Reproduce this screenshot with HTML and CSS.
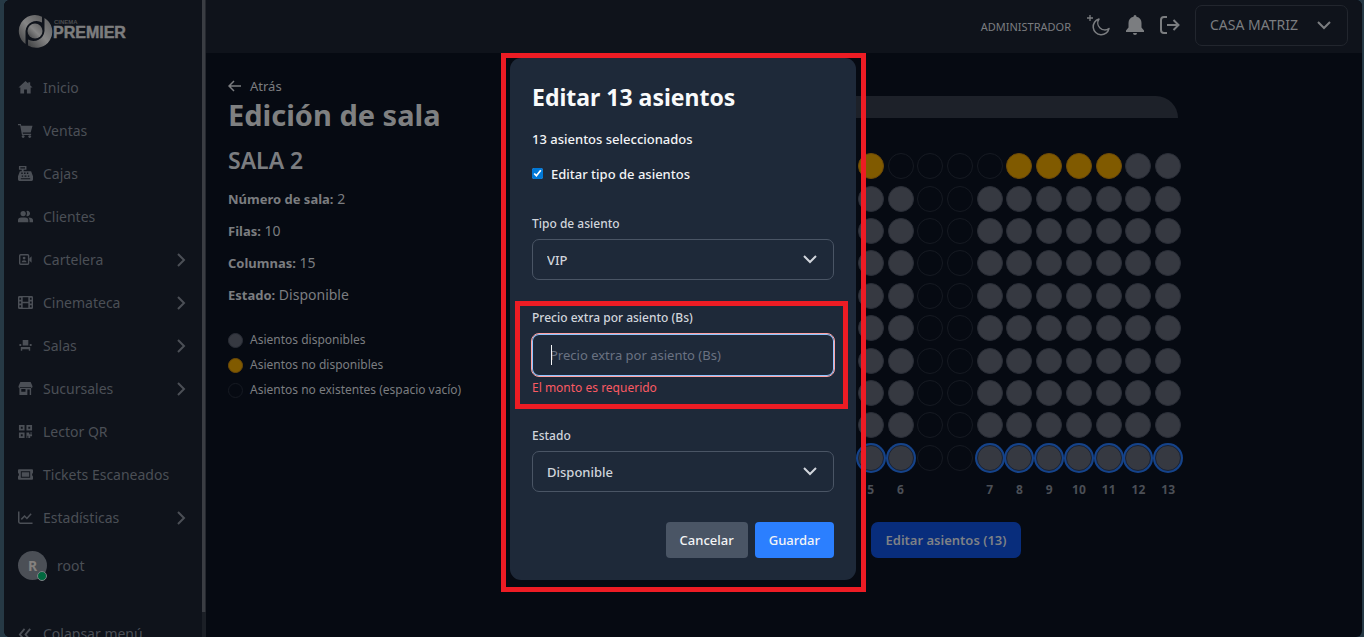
FILE: index.html
```html
<!DOCTYPE html>
<html lang="es">
<head>
    <meta charset="UTF-8">
    <meta name="viewport" content="width=device-width, initial-scale=1.0">
    <title>Edición de sala - Cinema Premier</title>
    <link rel="stylesheet" href="styles.css">
</head>
<body>

    <div class="app">
        <aside class="sidebar">
            <div class="sidebar-content">
                <a href="#" class="logo" aria-label="Cinema Premier">
                    <svg width="114" height="34" viewBox="0 0 114 34">
                        <defs>
                            <linearGradient id="metal" x1="0" y1="1" x2="1" y2="0">
                                <stop offset="0" stop-color="#3c3d3f"/>
                                <stop offset="0.5" stop-color="#858585"/>
                                <stop offset="1" stop-color="#5c5c5d"/>
                            </linearGradient>
                        </defs>
                        <path d="M24 2.700V8.500A11 11 0 0 0 7.500 17V30A16 16 0 0 1 24 2.700Z" fill="url(#metal)"/>
                        <path d="M26.500 4A16 16 0 0 1 10 31.500V25.500A11 11 0 0 0 26.500 17Z" fill="url(#metal)"/>
                        <circle cx="17" cy="17" r="7.500" fill="url(#metal)"/>
                        <text x="36" y="10" class="logo-small">CINEMA</text>
                        <text x="35" y="24" class="logo-text">PREMIER</text>
                    </svg>
                </a>

                <nav class="menu">
                    <a href="#"><svg viewBox="0 0 16 16"><path d="M8 1 0.500 8H2.500V14.500H6.500V10H9.500V14.500H13.500V8H15.500L13 5.600V2.500H11V3.800Z"/></svg><span>Inicio</span></a>
                    <a href="#"><svg viewBox="0 0 16 16"><path d="M0 1H3L3.500 3H15.500L13.500 10H5L5.300 11.500H14V12.700H4.200L2.300 2.300H0Z"/><circle cx="5.500" cy="14.500" r="1.500"/><circle cx="12.500" cy="14.500" r="1.500"/></svg><span>Ventas</span></a>
                    <a href="#"><svg viewBox="0 0 16 16"><path fill-rule="evenodd" d="M1 0H9V4H6V5.500H14L16 11V14.500Q16 16 14.500 16H1.500Q0 16 0 14.500V11L2 5.500H4V4H1ZM2.500 1.300V2.600H7.500V1.300ZM3.500 7V8.500H5V7ZM6.500 7V8.500H8V7ZM9.500 7V8.500H11V7ZM4 10V11.500H5.500V10ZM7 10V11.500H9V10ZM10.500 10V11.500H12V10ZM3 13V14.200H13V13Z"/></svg><span>Cajas</span></a>
                    <a href="#"><svg viewBox="0 0 16 16"><circle cx="5.500" cy="4.800" r="2.800"/><path d="M9 2.200A2.800 2.800 0 1 1 9 7.400Q10.500 4.800 9 2.200ZM0 14V12Q0 9 3.500 9H7.500Q11 9 11 12V14ZM12.300 14V12Q12.300 10.300 11 9Q16 9 16 12V14Z"/></svg><span>Clientes</span></a>
                    <a href="#" class="has-children"><svg viewBox="0 0 16 16"><rect x="1.800" y="3" width="9.500" height="10" rx="1" fill="none" stroke="currentColor" stroke-width="1.500"/><circle cx="6.500" cy="6.500" r="1.500"/><path d="M3.800 11Q4 8.800 6.500 8.800T9.200 11ZM12 7 14.500 4.500V11.500L12 9Z"/></svg><span>Cartelera</span><svg class="chevron" viewBox="0 0 16 16"><path d="M5 2 11 8 5 14"/></svg></a>
                    <a href="#" class="has-children"><svg viewBox="0 0 16 16"><path fill-rule="evenodd" d="M1.500 1H14.500Q16 1 16 2.500V13.500Q16 15 14.500 15H1.500Q0 15 0 13.500V2.500Q0 1 1.500 1ZM5 2.500V7.200H11V2.500ZM5 8.800V13.500H11V8.800ZM1.500 3V5H3.300V3ZM1.500 7V9H3.300V7ZM1.500 11V13H3.300V11ZM12.700 3V5H14.500V3ZM12.700 7V9H14.500V7ZM12.700 11V13H14.500V11Z"/></svg><span>Cinemateca</span><svg class="chevron" viewBox="0 0 16 16"><path d="M5 2 11 8 5 14"/></svg></a>
                    <a href="#" class="has-children"><svg viewBox="0 0 16 16"><path d="M5 2H11V8H5ZM1.500 6.500H3.500V8.500H1.500ZM12.500 6.500H14.500V8.500H12.500ZM3 9.500H13V13.500H11.500V12H4.500V13.500H3Z"/></svg><span>Salas</span><svg class="chevron" viewBox="0 0 16 16"><path d="M5 2 11 8 5 14"/></svg></a>
                    <a href="#" class="has-children"><svg viewBox="0 0 16 16"><path fill-rule="evenodd" d="M2.500 1H13.500L15.500 5.500Q15.500 7.500 14 7.500V15H1.500V7.500Q0.500 7.500 0.500 5.500ZM3.500 8.500V11.500H8V8.500ZM10 9V15H12.500V9ZM2 7.200H14V6.500H2Z"/></svg><span>Sucursales</span><svg class="chevron" viewBox="0 0 16 16"><path d="M5 2 11 8 5 14"/></svg></a>
                    <a href="#"><svg viewBox="0 0 16 16"><path fill-rule="evenodd" d="M1 1H7V7H1ZM3 3V5H5V3ZM9 1H15V7H9ZM11 3V5H13V3ZM1 9H7V15H1ZM3 11V13H5V11ZM9 9H12V11H15V13H13V15H11V12.500H10V15H9ZM13 9H15V10H13Z"/></svg><span>Lector QR</span></a>
                    <a href="#"><svg viewBox="0 0 16 16"><path fill-rule="evenodd" d="M1 2.500H15Q16 2.500 16 3.500V6Q14 8 16 10V12.500Q16 13.500 15 13.500H1Q0 13.500 0 12.500V10Q2 8 0 6V3.500Q0 2.500 1 2.500ZM3 4.500V11.500H13V4.500ZM4 5.500H12V10.500H4Z"/></svg><span>Tickets Escaneados</span></a>
                    <a href="#" class="has-children"><svg viewBox="0 0 16 16"><path d="M0.800 1.500V12.500Q0.800 14 2.300 14H15.500M3.500 10 7 6.500 9.500 9 14 4" fill="none" stroke="currentColor" stroke-width="1.600"/></svg><span>Estadísticas</span><svg class="chevron" viewBox="0 0 16 16"><path d="M5 2 11 8 5 14"/></svg></a>
                </nav>

                <a href="#" class="user">
                    <span class="avatar">R<i class="status"></i></span>
                    <span>root</span>
                </a>

                <button type="button" class="collapse">
                    <svg viewBox="0 0 16 16"><path d="M7 2 2 8 7 14M13 2 8 8 13 14"/></svg>
                    <span>Colapsar menú</span>
                </button>
            </div>
            <div class="scroll"><div class="scroll-thumb"></div></div>
        </aside>

        <div class="page">
            <header class="topbar">
                <span class="role">ADMINISTRADOR</span>
                <button type="button" class="icon-button" aria-label="Modo oscuro">
                    <svg width="24" height="24" viewBox="0 0 24 24"><path d="M12 6A8 8 0 1 0 22 15.500A7 7 0 0 1 12 6Z" fill="none" stroke="currentColor" stroke-width="1.500" stroke-linejoin="round"/><path d="M3 2V8M0 5H6" stroke="currentColor" stroke-width="1.300"/></svg>
                </button>
                <button type="button" class="icon-button" aria-label="Notificaciones">
                    <svg width="20" height="22" viewBox="0 0 20 22"><path d="M10 1Q11.500 1 11.500 2.800Q16.500 4 16.500 9V13.500L19 16.500V18H1V16.500L3.500 13.500V9Q3.500 4 8.500 2.800Q8.500 1 10 1ZM8 19H12Q12 21 10 21T8 19Z" fill="currentColor"/></svg>
                </button>
                <button type="button" class="icon-button" aria-label="Cerrar sesión">
                    <svg width="22" height="20" viewBox="0 0 22 20"><path d="M8 2H5Q2 2 2 5V15Q2 18 5 18H8M8 10H19M14.500 5 19.500 10 14.500 15" fill="none" stroke="currentColor" stroke-width="2"/></svg>
                </button>
                <div class="select-box branch">
                    <select aria-label="Sucursal">
                        <option>CASA MATRIZ</option>
                    </select>
                    <svg class="arrow" viewBox="0 0 16 16"><path d="M2 5 8 11 14 5"/></svg>
                </div>
            </header>

            <main class="content">
                <section class="info">
                    <a href="#" class="back">
                        <svg width="14" height="12" viewBox="0 0 14 12"><path d="M6 1 1 6 6 11M1 6H13" fill="none" stroke="currentColor" stroke-width="1.500"/></svg>
                        <span>Atrás</span>
                    </a>
                    <h1>Edición de sala</h1>
                    <h2>SALA 2</h2>
                    <p><b>Número de sala:</b> 2</p>
                    <p><b>Filas:</b> 10</p>
                    <p><b>Columnas:</b> 15</p>
                    <p><b>Estado:</b> Disponible</p>
                    <ul class="legend">
                        <li><i class="dot"></i>Asientos disponibles</li>
                        <li><i class="dot taken"></i>Asientos no disponibles</li>
                        <li><i class="dot empty"></i>Asientos no existentes (espacio vacío)</li>
                    </ul>
                </section>

                <section class="room">
                    <div class="screen"></div>
                    <div class="seats" id="seats"></div>
                    <div class="columns" id="columns"></div>
                    <button type="button" class="edit-seats">Editar asientos (13)</button>
                </section>
            </main>
        </div>
    </div>

    <div class="overlay">
        <form class="modal" role="dialog" aria-labelledby="modalTitle">
            <h3 id="modalTitle">Editar 13 asientos</h3>
            <p class="selected-count">13 asientos seleccionados</p>
            <label class="check">
                <input type="checkbox" checked>
                Editar tipo de asientos
            </label>

            <div class="field">
                <label for="tipo">Tipo de asiento</label>
                <div class="select-box">
                    <select id="tipo">
                        <option>VIP</option>
                    </select>
                    <svg class="arrow" viewBox="0 0 16 16"><path d="M2 5 8 11 14 5"/></svg>
                </div>
            </div>

            <div class="field marked">
                <label for="precio">Precio extra por asiento (Bs)</label>
                <div class="price-box">
                    <input type="text" id="precio" placeholder="Precio extra por asiento (Bs)">
                    <i class="caret"></i>
                </div>
                <span class="error">El monto es requerido</span>
            </div>

            <div class="field">
                <label for="estado">Estado</label>
                <div class="select-box">
                    <select id="estado">
                        <option>Disponible</option>
                    </select>
                    <svg class="arrow" viewBox="0 0 16 16"><path d="M2 5 8 11 14 5"/></svg>
                </div>
            </div>

            <div class="actions">
                <button type="button" class="cancel">Cancelar</button>
                <button type="submit" class="save">Guardar</button>
            </div>
        </form>
    </div>

    <script src="seats.js"></script>
</body>
</html>
```
FILE: styles.css
```css
* {
    box-sizing: border-box;
}
body {
    margin: 0;
    font-family: "Noto Sans", "Open Sans", sans-serif;
    font-size: 13px;
    line-height: 20px;
    background-color: #263945;
    color: #7b7d80;
}
a {
    color: inherit;
    text-decoration: none;
}
button, input, select {
    font-family: inherit;
    font-size: inherit;
    line-height: inherit;
    color: inherit;
}
.app {
    display: flex;
    height: 100vh;
    margin: 0 2px 0 4px;
    border-radius: 6px;
    overflow: hidden;
    background-color: #060a12;
}

/* Menú lateral */
.sidebar {
    display: flex;
    flex: none;
    width: 202px;
    background-color: #0f131b;
    color: #4b4f56;
}
.sidebar-content {
    flex: 1;
    padding: 14px 13px 0 14px;
    overflow: hidden;
}
.logo {
    display: block;
    height: 52px;
}
.logo-text {
    font: bold 16px "Liberation Sans", sans-serif;
    fill: #7d7d7e;
    stroke: #7d7d7e;
    stroke-width: 0.5px;
}
.logo-small {
    font: bold 6px "Liberation Sans", sans-serif;
    fill: #4b4d50;
}
.menu a {
    display: flex;
    align-items: center;
    height: 43px;
    gap: 10px;
}
.menu svg, .collapse svg {
    flex: none;
    width: 15px;
    height: 15px;
    fill: currentColor;
}
.menu span {
    flex: 1;
    font-size: 14px;
}
.menu .chevron {
    width: 16px;
    height: 16px;
}
.menu .chevron path, .collapse path {
    fill: none;
    stroke: currentColor;
    stroke-width: 2;
}
.user {
    display: flex;
    align-items: center;
    gap: 10px;
    margin-top: 12px;
    font-size: 14px;
}
.avatar {
    position: relative;
    width: 29px;
    height: 29px;
    border-radius: 50%;
    background-color: #4b4f56;
    color: #85817f;
    font-weight: bold;
    line-height: 29px;
    text-align: center;
}
.status {
    position: absolute;
    right: 0;
    bottom: -1px;
    width: 10px;
    height: 10px;
    border: 1px solid #7d8085;
    border-radius: 50%;
    background-color: #00693f;
}
.collapse {
    display: flex;
    align-items: center;
    gap: 10px;
    margin-top: 44px;
    padding: 0;
    border: 0;
    background: none;
    font-size: 14px;
    cursor: pointer;
}
.scroll {
    width: 4px;
    background-color: #1b1f26;
}
.scroll-thumb {
    height: 96%;
    border-right: 1px solid #25282f;
    background-color: #3a3d43;
}

/* Barra superior */
.page {
    flex: 1;
    min-width: 0;
}
.topbar {
    display: flex;
    align-items: center;
    justify-content: flex-end;
    height: 53px;
    padding: 0 14px 3px;
    background-color: #0f131b;
}
.role {
    margin-right: 16px;
    padding-top: 3px;
    font-size: 11px;
}
.icon-button {
    display: flex;
    padding: 0;
    margin-right: 14px;
    border: 0;
    background: none;
    cursor: pointer;
}
.select-box {
    position: relative;
}
.select-box select {
    width: 100%;
    height: 41px;
    padding: 2px 14px 0;
    border: 1px solid #4a5565;
    border-radius: 7px;
    background: none;
    appearance: none;
    font-weight: 500;
}
.arrow {
    position: absolute;
    top: 50%;
    right: 16px;
    width: 16px;
    height: 16px;
    margin-top: -8px;
    fill: none;
    stroke: currentColor;
    stroke-width: 2;
    pointer-events: none;
}
.branch {
    width: 153px;
}
.branch select {
    padding-top: 0;
    border-color: #22262e;
    font-size: 14px;
    font-weight: normal;
}

/* Edición de sala */
.content {
    display: grid;
    grid-template-columns: 322px 1fr;
    padding: 23px 20px 22px 22px;
}
.back {
    display: flex;
    align-items: center;
    gap: 8px;
}
h1 {
    margin: 0;
    font-size: 29px;
    line-height: 38px;
    color: #7f8081;
}
h2 {
    margin: 12px 0 15px;
    font-size: 23px;
    font-weight: 600;
    line-height: 28px;
}
.info p {
    margin: 0 0 12px;
    font-size: 14px;
}
.info b {
    font-size: 13px;
}
.legend {
    margin: 25px 0 0;
    padding: 0;
    list-style: none;
}
.legend li {
    display: flex;
    align-items: center;
    gap: 7px;
    margin-bottom: 5px;
    font-size: 12px;
}
.dot {
    width: 15px;
    height: 15px;
    border: 1px solid #2a2e37;
    border-radius: 50%;
    background-color: #363941;
}
.room {
    display: flex;
    flex-direction: column;
    align-items: center;
    padding-top: 20px;
}
.screen {
    width: 464px;
    height: 22px;
    border-radius: 22px 22px 0 0;
    background-color: #1d2129;
}
.seats {
    display: grid;
    grid-template-columns: 28px repeat(15, 1fr);
    grid-template-rows: repeat(10, 1fr);
    place-items: center;
    width: 474px;
    height: 324px;
    margin-top: 32px;
}
.row-name, .columns {
    font-size: 12px;
    font-weight: bold;
    color: #4b4f56;
}
.seat {
    width: 26px;
    height: 26px;
    padding: 0;
    border: 1px solid #2a2e37;
    border-radius: 50%;
    background-color: #363941;
    cursor: pointer;
}
.taken {
    border-color: #6e4a07;
    background-color: #805a00;
}
.empty {
    border-color: #161a22;
    background: none;
}
.selected {
    border-color: #1a2233;
    box-shadow: 0 0 0 2px #15438a;
}
.columns {
    display: grid;
    grid-template-columns: 28px repeat(15, 1fr);
    width: 474px;
    margin: 6px 0 22px;
    text-align: center;
}
.edit-seats {
    height: 36px;
    padding: 0 15px;
    border: 0;
    border-radius: 7px;
    background-color: #082d7c;
    color: #7e8186;
    font-weight: 600;
    cursor: pointer;
}

/* Modal */
.overlay {
    position: fixed;
    inset: 0;
    display: flex;
    align-items: center;
    justify-content: center;
    padding-left: 2px;
}
.modal {
    position: relative;
    width: 346px;
    padding: 22px;
    border-radius: 11px;
    background-color: #1e2939;
    color: #d1d5dc;
}
.modal::before, .marked::before {
    content: "";
    position: absolute;
    inset: -5px -10px -12px -9px;
    border: 5px solid #ed1c24;
    pointer-events: none;
}
.modal h3 {
    margin: 0 0 15px;
    font-size: 23px;
    line-height: 34px;
    color: #f9fafb;
}
.selected-count {
    margin: 0 0 15px;
    font-weight: 500;
    color: #f3f4f6;
}
.check {
    display: flex;
    align-items: center;
    gap: 8px;
    margin-bottom: 30px;
    font-weight: 500;
    color: #f3f4f6;
}
.check input {
    width: 11px;
    height: 11px;
    margin: 0;
    accent-color: #0078d7;
}
.field {
    position: relative;
    margin-bottom: 28px;
}
.field label {
    display: block;
    margin-bottom: 5px;
    font-size: 12px;
    font-weight: 500;
}
.marked::before {
    inset: -7px -14px -11px -17px;
}
.price-box {
    position: relative;
    margin: 0 -1px;
}
.price-box input {
    display: block;
    width: 100%;
    height: 44px;
    padding: 0 18px;
    border: 1px solid #ffa2a2;
    border-radius: 8px;
    outline: 0;
    background: none;
    box-shadow: inset 0 0 0 1px #8ec5ff;
    caret-color: transparent;
}
.price-box input::placeholder {
    color: #6a7282;
}
.caret {
    position: absolute;
    top: 12px;
    left: 20px;
    width: 1px;
    height: 20px;
    background-color: #f3f4f6;
}
.error {
    display: block;
    padding-top: 1px;
    font-size: 12px;
    color: #fb5a63;
}
.actions {
    display: flex;
    justify-content: flex-end;
    gap: 7px;
    margin-top: 30px;
}
.actions button {
    height: 36px;
    padding: 0 14px;
    border: 0;
    border-radius: 4px;
    color: #f3f4f6;
    font-weight: 500;
    cursor: pointer;
}
.cancel {
    background-color: #4a5565;
}
.save {
    background-color: #2b7fff;
}
```
FILE: seats.js
```js
// o = disponible, x = no disponible, . = espacio vacío, s = seleccionado
const rows = [
    'xxxxx....xxxxoo',
    'oooooo..ooooooo',
    'oooooo..ooooooo',
    'oooooo..ooooooo',
    'oooooo..ooooooo',
    'oooooo..ooooooo',
    'oooooo..ooooooo',
    'oooooo..ooooooo',
    'oooooo..ooooooo',
    'ssssss..sssssss'
];
const classes = { o: 'seat', x: 'seat taken', '.': 'seat empty', s: 'seat selected' };

const seats = document.getElementById('seats');
const columns = document.getElementById('columns');

rows.forEach((row, i) => {
    const letter = String.fromCharCode(65 + i);
    const name = document.createElement('span');
    name.className = 'row-name';
    name.textContent = letter;
    seats.appendChild(name);

    row.split('').forEach((type, j) => {
        const seat = document.createElement('button');
        seat.type = 'button';
        seat.className = classes[type];
        seat.setAttribute('aria-label', 'Asiento ' + letter + (j + 1));
        seats.appendChild(seat);
    });
});

// Los pasillos no llevan número
let number = 0;
columns.appendChild(document.createElement('span'));
rows[rows.length - 1].split('').forEach(type => {
    const label = document.createElement('span');
    if (type !== '.') {
        number++;
        label.textContent = number;
    }
    columns.appendChild(label);
});
```
